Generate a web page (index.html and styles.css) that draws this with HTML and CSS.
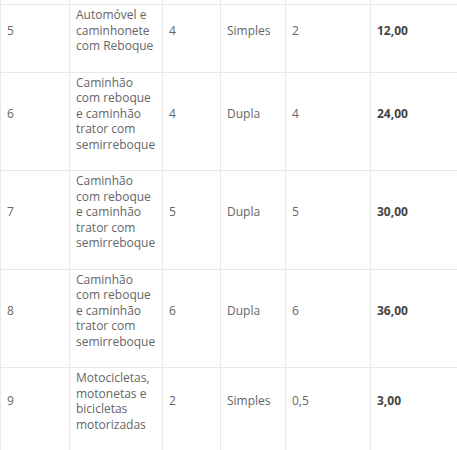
FILE: index.html
```html
<!DOCTYPE html>
<html lang="pt">
<head>
<meta charset="utf-8">
<link rel="stylesheet" href="styles.css">
</head>
<body>
<table class="tarifas">
  <colgroup>
    <col class="c1"><col class="c2"><col class="c3"><col class="c4"><col class="c5"><col class="c6">
  </colgroup>
  <tbody>
    <tr class="spacer"><td></td><td></td><td></td><td></td><td></td><td></td></tr>
    <tr>
      <td>5</td>
      <td>Automóvel e caminhonete com Reboque</td>
      <td>4</td>
      <td>Simples</td>
      <td>2</td>
      <td><strong>12,00</strong></td>
    </tr>
    <tr>
      <td>6</td>
      <td>Caminhão com reboque e caminhão trator com semirreboque</td>
      <td>4</td>
      <td>Dupla</td>
      <td>4</td>
      <td><strong>24,00</strong></td>
    </tr>
    <tr>
      <td>7</td>
      <td>Caminhão com reboque e caminhão trator com semirreboque</td>
      <td>5</td>
      <td>Dupla</td>
      <td>5</td>
      <td><strong>30,00</strong></td>
    </tr>
    <tr>
      <td>8</td>
      <td>Caminhão com reboque e caminhão trator com semirreboque</td>
      <td>6</td>
      <td>Dupla</td>
      <td>6</td>
      <td><strong>36,00</strong></td>
    </tr>
    <tr>
      <td>9</td>
      <td>Motocicletas, motonetas e bicicletas motorizadas</td>
      <td>2</td>
      <td>Simples</td>
      <td>0,5</td>
      <td><strong>3,00</strong></td>
    </tr>
  </tbody>
</table>
</body>
</html>
```
FILE: styles.css
```css
html, body {
  margin: 0;
  padding: 0;
  background: #fff;
  overflow: hidden;
}
.tarifas {
  border-collapse: collapse;
  table-layout: fixed;
  width: 470px;
  font-family: "Open Sans", "Liberation Sans", sans-serif;
  font-size: 12px;
  line-height: 15.5px;
  color: #666;
}
.c1 { width: 69px; }
.c2 { width: 93px; }
.c3 { width: 58px; }
.c4 { width: 65px; }
.c5 { width: 85px; }
.c6 { width: 100px; }
.tarifas td {
  border: 1px solid #e9e9e9;
  padding: 2px 6px 18px;
  vertical-align: middle;
  text-align: left;
}
.tarifas .spacer td {
  border-top: 0;
  padding: 0;
  height: 4px;
}
.tarifas strong {
  font-weight: 700;
  color: #444;
}
```
